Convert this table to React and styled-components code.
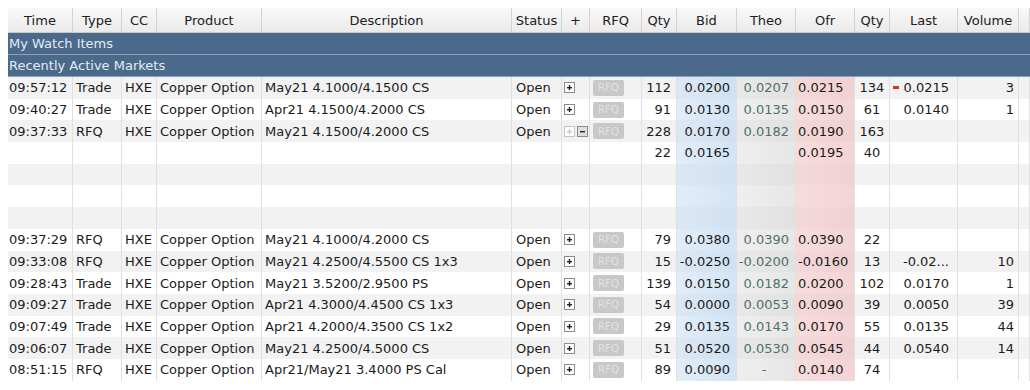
import React from 'react';
import styled, { createGlobalStyle } from 'styled-components';

const COLS =
  '65px 49px 35px 105px 250px 50px 28px 52px 35px 60px 59px 59px 35px 68px 61px 11px';

const GlobalStyle = createGlobalStyle`
  html, body {
    margin: 0;
    padding: 0;
    background: #fff;
    overflow: hidden;
  }
  body {
    font-family: "DejaVu Sans", Verdana, sans-serif;
    font-size: 13px;
    color: #1b1b1b;
  }
  * {
    box-sizing: border-box;
  }
`;

const Page = styled.div`
  padding: 8px 0 0 8px;
`;

const Grid = styled.div`
  width: 1022px;
`;

const HeaderRow = styled.div`
  display: grid;
  grid-template-columns: ${COLS};
  height: 25px;
  background: linear-gradient(#f9f9f9, #eaeaea);
  border-bottom: 1px solid #c9c9c9;
`;

const HeadCell = styled.div`
  display: flex;
  align-items: center;
  justify-content: center;
  border-right: 1px solid #d3d3d3;
  color: #202020;
  white-space: nowrap;
`;

const Band = styled.div`
  height: 22px;
  display: flex;
  align-items: center;
  padding-left: 1px;
  background: #4a698b;
  color: #e4ebf2;
  border-bottom: 1px solid #8ba1b9;
`;

const Row = styled.div`
  display: grid;
  grid-template-columns: ${COLS};
  height: 21.7px;
  background: ${({ $alt }) => ($alt ? '#f2f2f2' : '#ffffff')};
`;

const tints = {
  bid: 'linear-gradient(to right, rgba(206,225,244,0.62), rgba(196,218,241,0.72))',
  theo: 'linear-gradient(to right, rgba(222,222,222,0.5), rgba(214,214,214,0.6))',
  ofr: 'linear-gradient(to right, rgba(244,205,207,0.7), rgba(240,196,199,0.72))',
};

const justify = { left: 'flex-start', right: 'flex-end', center: 'center' };

const Cell = styled.div`
  display: flex;
  align-items: center;
  justify-content: ${({ $align = 'left' }) => justify[$align]};
  padding: ${({ $pad = '0 4px' }) => $pad};
  border-right: 1px solid #e0e0e0;
  white-space: nowrap;
  overflow: hidden;
  color: ${({ $muted }) => ($muted ? '#52706b' : '#1b1b1b')};
  background-image: ${({ $tint }) => ($tint ? tints[$tint] : 'none')};
`;

const RfqButton = styled.span`
  display: inline-flex;
  align-items: center;
  justify-content: center;
  width: 31px;
  height: 16px;
  border-radius: 2px;
  background: #c8c8c8;
  color: #e2e2e2;
  font-size: 10px;
  letter-spacing: 0.2px;
`;

const Icons = styled.span`
  display: flex;
  gap: 2px;
`;

const Dash = styled.span`
  width: 6px;
  height: 3px;
  background: #d8361c;
`;

const LastValue = styled.span`
  margin-left: auto;
`;

const BoxIcon = ({ kind, faded }) => (
  <svg width="11" height="11" viewBox="0 0 11 11">
    <rect
      x="0.5"
      y="0.5"
      width="10"
      height="10"
      fill={kind === 'minus' ? '#dedede' : '#fff'}
      stroke={faded ? '#c4c4c4' : '#8c8c8c'}
    />
    <rect x="3" y="5" width="5" height="1.4" fill={faded ? '#c8c8c8' : '#222'} />
    {kind === 'plus' && (
      <rect x="4.8" y="3" width="1.4" height="5" fill={faded ? '#c8c8c8' : '#222'} />
    )}
  </svg>
);

const headers = [
  'Time', 'Type', 'CC', 'Product', 'Description', 'Status', '+', 'RFQ',
  'Qty', 'Bid', 'Theo', 'Ofr', 'Qty', 'Last', 'Volume', '',
];

const rows = [
  { time: '09:57:12', type: 'Trade', desc: 'May21 4.1000/4.1500 CS', icon: 'plus', qty: '112', bid: '0.0200', theo: '0.0207', ofr: '0.0215', qty2: '134', last: '0.0215', down: true, vol: '3' },
  { time: '09:40:27', type: 'Trade', desc: 'Apr21 4.1500/4.2000 CS', icon: 'plus', qty: '91', bid: '0.0130', theo: '0.0135', ofr: '0.0150', qty2: '61', last: '0.0140', vol: '1' },
  { time: '09:37:33', type: 'RFQ', desc: 'May21 4.1500/4.2000 CS', icon: 'both', qty: '228', bid: '0.0170', theo: '0.0182', ofr: '0.0190', qty2: '163' },
  { sub: true, qty: '22', bid: '0.0165', ofr: '0.0195', qty2: '40' },
  { sub: true },
  { sub: true },
  { sub: true },
  { time: '09:37:29', type: 'RFQ', desc: 'May21 4.1000/4.2000 CS', icon: 'plus', qty: '79', bid: '0.0380', theo: '0.0390', ofr: '0.0390', qty2: '22' },
  { time: '09:33:08', type: 'RFQ', desc: 'May21 4.2500/4.5500 CS 1x3', icon: 'plus', qty: '15', bid: '-0.0250', theo: '-0.0200', ofr: '-0.0160', qty2: '13', last: '-0.02...', vol: '10' },
  { time: '09:28:43', type: 'Trade', desc: 'May21 3.5200/2.9500 PS', icon: 'plus', qty: '139', bid: '0.0150', theo: '0.0182', ofr: '0.0200', qty2: '102', last: '0.0170', vol: '1' },
  { time: '09:09:27', type: 'Trade', desc: 'Apr21 4.3000/4.4500 CS 1x3', icon: 'plus', qty: '54', bid: '0.0000', theo: '0.0053', ofr: '0.0090', qty2: '39', last: '0.0050', vol: '39' },
  { time: '09:07:49', type: 'Trade', desc: 'Apr21 4.2000/4.3500 CS 1x2', icon: 'plus', qty: '29', bid: '0.0135', theo: '0.0143', ofr: '0.0170', qty2: '55', last: '0.0135', vol: '44' },
  { time: '09:06:07', type: 'Trade', desc: 'May21 4.2500/4.5000 CS', icon: 'plus', qty: '51', bid: '0.0520', theo: '0.0530', ofr: '0.0545', qty2: '44', last: '0.0540', vol: '14' },
  { time: '08:51:15', type: 'RFQ', desc: 'Apr21/May21 3.4000 PS Cal', icon: 'plus', qty: '89', bid: '0.0090', theo: '-', ofr: '0.0140', qty2: '74' },
];

const MarketRow = ({ row, alt }) => (
  <Row $alt={alt}>
    <Cell $pad="0 1px">{row.time}</Cell>
    <Cell $pad="0 3px">{row.type}</Cell>
    <Cell $pad="0 3px">{row.sub ? '' : 'HXE'}</Cell>
    <Cell $pad="0 3px">{row.sub ? '' : 'Copper Option'}</Cell>
    <Cell $pad="0 3px">{row.desc}</Cell>
    <Cell $pad="0 4px">{row.sub ? '' : 'Open'}</Cell>
    <Cell $pad="0 2px">
      {row.icon === 'plus' && <BoxIcon kind="plus" />}
      {row.icon === 'both' && (
        <Icons>
          <BoxIcon kind="plus" faded />
          <BoxIcon kind="minus" />
        </Icons>
      )}
    </Cell>
    <Cell $pad="0 3px">{!row.sub && <RfqButton>RFQ</RfqButton>}</Cell>
    <Cell $align="right" $pad="0 5px">{row.qty}</Cell>
    <Cell $align="right" $pad="0 6px 0 2px" $tint="bid">{row.bid}</Cell>
    <Cell
      $align={row.theo === '-' ? 'center' : 'right'}
      $pad="0 6px 0 2px"
      $tint="theo"
      $muted
    >
      {row.theo}
    </Cell>
    <Cell $pad="0 2px 0 2px" $tint="ofr">{row.ofr}</Cell>
    <Cell $align="center" $pad="0 1px">{row.qty2}</Cell>
    <Cell $pad="0 8px 0 3px">
      {row.down && <Dash />}
      <LastValue>{row.last}</LastValue>
    </Cell>
    <Cell $align="right" $pad="0 4px">{row.vol}</Cell>
    <Cell />
  </Row>
);

const App = () => (
  <>
    <GlobalStyle />
    <Page>
      <Grid>
        <HeaderRow>
          {headers.map((h, i) => (
            <HeadCell key={i}>{h}</HeadCell>
          ))}
        </HeaderRow>
        <Band>My Watch Items</Band>
        <Band>Recently Active Markets</Band>
        {rows.map((row, i) => (
          <MarketRow key={i} row={row} alt={i % 2 === 0} />
        ))}
      </Grid>
    </Page>
  </>
);

export default App;
